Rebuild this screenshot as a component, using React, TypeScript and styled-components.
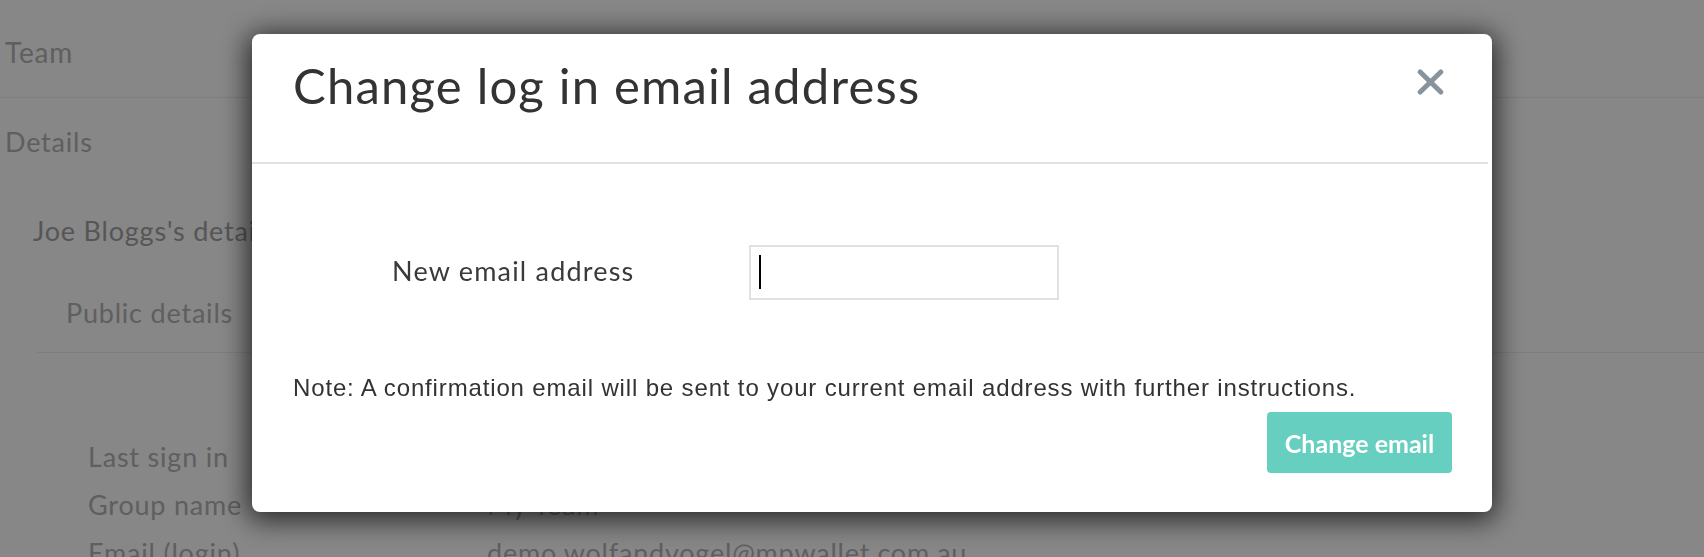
import React from "react";
import styled, { createGlobalStyle } from "styled-components";

const GlobalStyle = createGlobalStyle`
  html, body {
    margin: 0;
    padding: 0;
    background: #ffffff;
    overflow: hidden;
  }
  * { box-sizing: border-box; }
`;

const Page = styled.div`
  width: 1704px;
  height: 557px;
  font-family: "Lato", "Noto Sans", sans-serif;
  font-size: 27px;
  letter-spacing: 0.8px;
  color: #b3b3b3;
  overflow: hidden;
`;

const NavItem = styled.div<{ $top: number; $bottom: number; $divider?: boolean; $size?: number }>`
  line-height: 30px;
  font-size: ${(p) => p.$size ?? 27}px;
  padding: ${(p) => p.$top}px 6px ${(p) => p.$bottom}px 5px;
  border-bottom: ${(p) => (p.$divider ? "1px solid #eeeeee" : "none")};
`;

const Section = styled.div`
  padding: 31px 0 0 33px;
`;

const SectionTitle = styled.div`
  line-height: 30px;
  color: #a3a3a3;
  white-space: nowrap;
`;

const Tabs = styled.div`
  margin: 52px 0 0 4px;
  padding: 0 0 24px 29px;
  border-bottom: 1px solid #eeeeee;
`;

const Tab = styled.div`
  line-height: 30px;
`;

const DetailList = styled.div`
  padding: 80px 0 0 55px;
`;

const DetailRow = styled.div`
  display: grid;
  grid-template-columns: 399px 1fr;
  line-height: 48px;
  white-space: nowrap;
`;

const Backdrop = styled.div`
  position: fixed;
  inset: 0;
  background: rgba(0, 0, 0, 0.47);
  display: flex;
  align-items: flex-start;
`;

const Modal = styled.div`
  width: 1240px;
  margin: 34px 0 0 252px;
  background: #ffffff;
  border-radius: 8px;
  box-shadow: 0 4px 28px 4px rgba(0, 0, 0, 0.72);
  overflow: hidden;
`;

const Header = styled.div`
  height: 130px;
  display: flex;
  align-items: flex-start;
  justify-content: space-between;
  padding: 22px 44px 0 41px;
  border-bottom: 2px solid #dee2e6;
  margin-right: 4px;
`;

const Title = styled.h1`
  margin: 0;
  font-family: "Lato", "Noto Sans", sans-serif;
  font-weight: 400;
  font-size: 49px;
  letter-spacing: 1.2px;
  line-height: 1.2;
  color: #333333;
`;

const CloseButton = styled.button`
  margin: 13px 0 0;
  padding: 0;
  border: 0;
  background: transparent;
  width: 27px;
  height: 26px;
  display: flex;
  cursor: pointer;
`;

const Body = styled.div`
  padding: 0 40px 39px 41px;
  display: flex;
  flex-direction: column;
`;

const FormRow = styled.div`
  margin-top: 81px;
  padding-left: 99px;
  display: flex;
  align-items: center;
`;

const Label = styled.label`
  width: 357px;
  margin-top: -4px;
  font-family: "Lato", "Noto Sans", sans-serif;
  font-size: 27px;
  letter-spacing: 1.2px;
  color: #3a3a3a;
`;

const InputWrap = styled.div`
  position: relative;
  width: 310px;
  height: 55px;
`;

const Input = styled.input`
  width: 100%;
  height: 100%;
  border: 2px solid #dee2e6;
  outline: none;
  padding: 0 10px;
  font-size: 24px;
  caret-color: transparent;
  background: #ffffff;
`;

const Caret = styled.span`
  position: absolute;
  left: 10px;
  top: 10px;
  width: 2px;
  height: 34px;
  background: #000000;
`;

const Note = styled.p`
  margin: 74px 0 0;
  font-family: "Liberation Sans", Arial, sans-serif;
  font-size: 24px;
  letter-spacing: 0.85px;
  line-height: 27px;
  color: #333333;
  white-space: nowrap;
`;

const Actions = styled.div`
  margin-top: 11px;
  display: flex;
  justify-content: flex-end;
`;

const PrimaryButton = styled.button`
  width: 185px;
  height: 61px;
  border: 0;
  border-radius: 4px;
  background: #66cfc0;
  color: #ffffff;
  font-family: "Lato", "Noto Sans", sans-serif;
  font-size: 25px;
  font-weight: 700;
  cursor: pointer;
`;

export default function App() {
  return (
    <>
      <GlobalStyle />
      <Page>
        <NavItem $top={37} $bottom={30} $divider $size={28}>
          Team
        </NavItem>
        <NavItem $top={29} $bottom={28}>
          Details
        </NavItem>
        <Section>
          <SectionTitle>Joe Bloggs's details</SectionTitle>
          <Tabs>
            <Tab>Public details</Tab>
          </Tabs>
          <DetailList>
            <DetailRow>
              <span>Last sign in</span>
              <span>12/03/2021 10:42am</span>
            </DetailRow>
            <DetailRow>
              <span>Group name</span>
              <span>My Team</span>
            </DetailRow>
            <DetailRow>
              <span>Email (login)</span>
              <span>demo.wolfandvogel@mpwallet.com.au</span>
            </DetailRow>
          </DetailList>
        </Section>
      </Page>
      <Backdrop>
        <Modal role="dialog" aria-labelledby="modal-title">
          <Header>
            <Title id="modal-title">Change log in email address</Title>
            <CloseButton aria-label="Close">
              <svg width="27" height="26" viewBox="0 0 27 26">
                <path
                  d="M3.2 3 L23.8 23 M23.8 3 L3.2 23"
                  stroke="#87949d"
                  strokeWidth="5"
                  strokeLinecap="round"
                  fill="none"
                />
              </svg>
            </CloseButton>
          </Header>
          <Body>
            <FormRow>
              <Label htmlFor="new-email">New email address</Label>
              <InputWrap>
                <Input id="new-email" type="email" />
                <Caret />
              </InputWrap>
            </FormRow>
            <Note>
              Note: A confirmation email will be sent to your current email address with further
              instructions.
            </Note>
            <Actions>
              <PrimaryButton>Change email</PrimaryButton>
            </Actions>
          </Body>
        </Modal>
      </Backdrop>
    </>
  );
}
